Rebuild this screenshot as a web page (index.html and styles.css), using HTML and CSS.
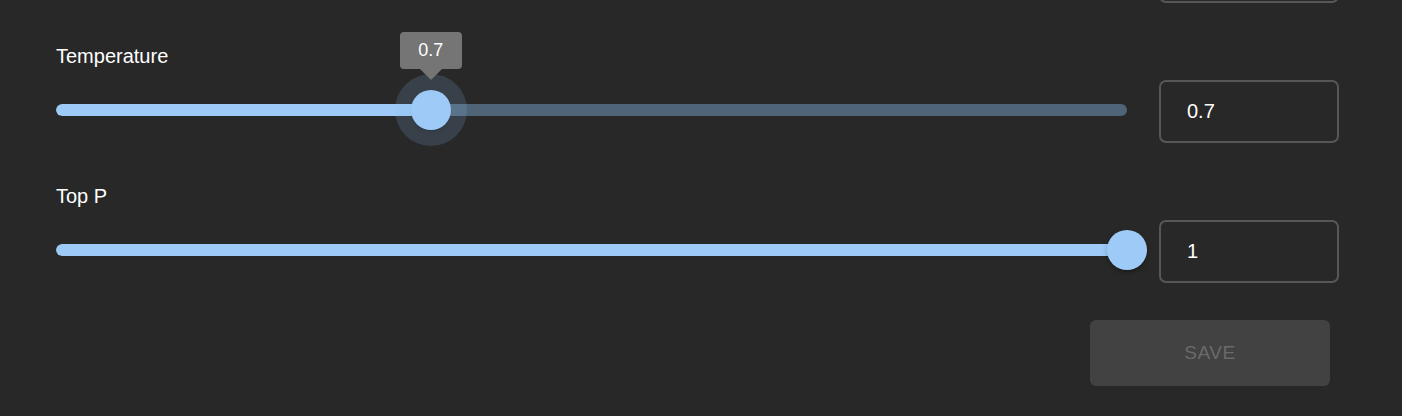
FILE: index.html
```html
<!DOCTYPE html>
<html lang="en">
<head>
<meta charset="utf-8">
<title>Model settings</title>
<link rel="stylesheet" href="styles.css">
</head>
<body>
<div class="panel">
  <div class="row row-top">
    <input class="num-input" type="text" value="" aria-label="Previous setting">
  </div>

  <section class="field">
    <label class="field-label">Temperature</label>
    <div class="row">
      <div class="slider">
        <div class="rail">
          <div class="fill" style="width: 35%"></div>
        </div>
        <div class="thumb thumb-active" style="left: 35%">
          <div class="tip">0.7</div>
        </div>
      </div>
      <input class="num-input" type="text" value="0.7" aria-label="Temperature">
    </div>
  </section>

  <section class="field">
    <label class="field-label">Top P</label>
    <div class="row">
      <div class="slider">
        <div class="rail">
          <div class="fill" style="width: 100%"></div>
        </div>
        <div class="thumb" style="left: 100%"></div>
      </div>
      <input class="num-input" type="text" value="1" aria-label="Top P">
    </div>
  </section>

  <div class="actions">
    <button class="save-btn" disabled>Save</button>
  </div>
</div>
</body>
</html>
```

FILE: styles.css
```css
html, body {
  margin: 0;
  padding: 0;
  background: #282828;
  height: 100%;
  overflow: hidden;
}

body {
  font-family: "Liberation Sans", Arial, sans-serif;
  color: #ffffff;
}

.panel {
  margin-top: -60px;
  padding: 0 63px 0 56px;
}

.row {
  display: flex;
  align-items: center;
  gap: 32px;
}

.row-top {
  justify-content: flex-end;
}

.field {
  margin-top: 41px;
}

.field-label {
  display: block;
  font-size: 20px;
  line-height: 24px;
  height: 24px;
  margin-bottom: 12px;
  color: #ffffff;
}

.num-input {
  box-sizing: border-box;
  width: 180px;
  height: 63px;
  flex: 0 0 180px;
  margin: 0;
  border: 2px solid #575757;
  border-radius: 7px;
  background: transparent;
  color: #ffffff;
  font-family: "Liberation Sans", Arial, sans-serif;
  font-size: 20px;
  padding: 0 0 0 26px;
  outline: none;
}

.slider {
  position: relative;
  flex: 1;
  height: 40px;
  display: flex;
  align-items: center;
  margin-bottom: 3px;
}

.rail {
  width: 100%;
  height: 12px;
  border-radius: 6px;
  background: #4f6476;
  overflow: hidden;
}

.fill {
  height: 100%;
  border-radius: 6px;
  background: #9dcaf6;
}

.thumb {
  position: absolute;
  top: 50%;
  width: 40px;
  height: 40px;
  border-radius: 50%;
  background: #9dcaf6;
  transform: translate(-50%, -50%);
  box-shadow: 0 3px 3px -1px rgba(0, 0, 0, 0.25), 0 2px 6px rgba(0, 0, 0, 0.15);
}

.thumb-active {
  box-shadow: 0 0 0 16px rgba(144, 202, 249, 0.16), 0 3px 3px -1px rgba(0, 0, 0, 0.25);
}

.tip {
  position: absolute;
  left: 50%;
  bottom: 61px;
  transform: translateX(-50%);
  width: 62px;
  height: 37px;
  border-radius: 4px;
  background: #757575;
  color: #ffffff;
  font-size: 18px;
  line-height: 37px;
  text-align: center;
}

.tip::after {
  content: "";
  position: absolute;
  left: 50%;
  top: 100%;
  margin-left: -11px;
  border-left: 11px solid transparent;
  border-right: 11px solid transparent;
  border-top: 11px solid #757575;
}

.actions {
  display: flex;
  justify-content: flex-end;
  margin-top: 37px;
  padding-right: 9px;
}

.save-btn {
  width: 240px;
  height: 66px;
  border: none;
  border-radius: 6px;
  background: #424242;
  color: #6a6a6a;
  font-family: "Liberation Sans", Arial, sans-serif;
  font-size: 19px;
  letter-spacing: 0.6px;
  text-transform: uppercase;
  padding: 0;
}
```
